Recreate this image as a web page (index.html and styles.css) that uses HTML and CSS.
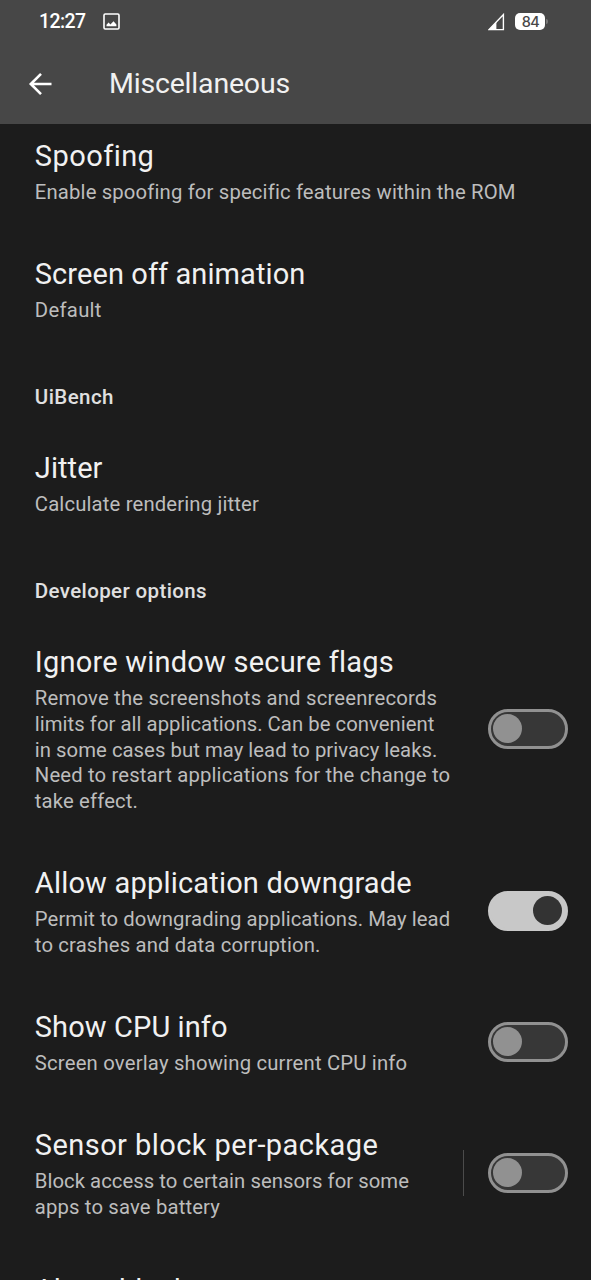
FILE: index.html
```html
<!DOCTYPE html>
<html lang="en">
<head>
<meta charset="utf-8">
<title>Miscellaneous</title>
<link rel="stylesheet" href="styles.css">
</head>
<body>
<div class="screen">
  <header class="header">
    <div class="status">
      <span class="clock">12:27</span>
      <svg class="picture" width="17" height="17" viewBox="0 0 17 17"><rect x="1" y="1" width="15" height="15" rx="1.2" fill="none" stroke="#fff" stroke-width="1.6"/><path d="M3.5 13.2V11.7L5.6 9.6L7.4 11.4L10.5 8.2L13.4 11.5V13.2Z" fill="#fff"/></svg>
      <svg class="signal" width="17" height="18" viewBox="0 0 17 18"><path d="M1.2 16.6L15.4 1.6V16.6Z" fill="none" stroke="#fff" stroke-width="1.4"/><path d="M.5 17L8.4 8.8V17Z" fill="#fff"/></svg>
      <span class="battery">84</span><span class="battery-tip"></span>
    </div>
    <div class="toolbar">
      <svg class="back" width="24" height="24" viewBox="0 0 24 24"><path d="M23.5 12H3M13 1.8L2.8 12L13 22.2" fill="none" stroke="#fff" stroke-width="2.6"/></svg>
      <h1 class="heading">Miscellaneous</h1>
    </div>
  </header>
  <main class="list">
    <section class="item"><div class="text">
      <h2 class="title t44">Spoofing</h2>
      <p class="summary"><span class="t15">Enable spoofing for specific features within the ROM</span></p>
    </div></section>
    <section class="item"><div class="text">
      <h2 class="title t08">Screen off animation</h2>
      <p class="summary"><span class="t30">Default</span></p>
    </div></section>
    <h3 class="category t44">UiBench</h3>
    <section class="item"><div class="text">
      <h2 class="title t08">Jitter</h2>
      <p class="summary"><span class="t15">Calculate rendering jitter</span></p>
    </div></section>
    <h3 class="category t38">Developer options</h3>
    <section class="item"><div class="text">
      <h2 class="title t22">Ignore window secure flags</h2>
      <p class="summary"><span class="t19">Remove the screenshots and screenrecords</span><br><span class="t04">limits for all applications. Can be convenient</span><br><span class="t04">in some cases but may lead to privacy leaks.</span><br><span class="t15">Need to restart applications for the change to</span><br><span class="t15">take effect.</span></p>
    </div><span class="switch"></span></section>
    <section class="item"><div class="text">
      <h2 class="title t19">Allow application downgrade</h2>
      <p class="summary"><span class="t08">Permit to downgrading applications. May lead</span><br><span class="t15">to crashes and data corruption.</span></p>
    </div><span class="switch on"></span></section>
    <section class="item"><div class="text">
      <h2 class="title t10">Show CPU info</h2>
      <p class="summary"><span class="t19">Screen overlay showing current CPU info</span></p>
    </div><span class="switch"></span></section>
    <section class="item"><div class="text">
      <h2 class="title t44">Sensor block per-package</h2>
      <p class="summary"><span class="t04">Block access to certain sensors for some</span><br><span class="t15">apps to save battery</span></p>
    </div><span class="divider"></span><span class="switch"></span></section>
    <section class="item last"><div class="text">
      <h2 class="title">Alarm blocker</h2>
    </div></section>
  </main>
</div>
</body>
</html>
```
FILE: styles.css
```css
* { box-sizing: border-box; }
body { margin: 0; background: #1c1c1c; font-family: Roboto, sans-serif; color: #f1f1f1; font-variant-ligatures: none; }
h1, h2, h3, p { margin: 0; font-weight: 400; }
.screen { width: 591px; height: 1280px; overflow: hidden; display: flex; flex-direction: column; }

.header { flex: none; height: 124px; background: #474747; }
.status { height: 44px; display: flex; align-items: center; padding: 0 43px 0 39px; }
.clock { width: 64px; font-size: 19.5px; font-weight: 500; letter-spacing: -.6px; color: #fff; line-height: 42px; padding-bottom: 1px; }
.picture { margin-bottom: 1px; }
.signal { margin-left: auto; margin-right: 10px; }
.battery { width: 30px; height: 17px; margin-bottom: 2px; border-radius: 5px; background: #fff; color: #474747; font-family: Inter, sans-serif; font-size: 14.5px; font-weight: 500; letter-spacing: -.6px; line-height: 17.5px; text-align: center; padding-left: 1px; }
.battery-tip { width: 2px; height: 5px; margin: 0 0 2px 1px; background: #777; border-radius: 0 2px 2px 0; }
.toolbar { height: 80px; display: flex; align-items: center; padding-left: 28px; }
.heading { margin-left: 57px; font-size: 28.5px; letter-spacing: -.19px; line-height: 38px; }

.list { flex: none; padding-top: 13px; margin-top: -24px; clip-path: inset(24px 0 0 0); }
.item { display: flex; align-items: center; padding: 24px 23px 25.3px 34.8px; }
.last { padding-top: 25px; }
.text { flex: 1; white-space: nowrap; }
.title { font-size: 29px; line-height: 38px; margin-bottom: 5px; }
.summary { font-size: 20.3px; line-height: 25.75px; color: #bdbdbd; }
.category { height: 76px; padding: 33px 0 0 34.8px; font-size: 20.5px; font-weight: 500; line-height: 30px; color: #e0e0e0; }

.switch { flex: none; width: 80px; height: 40px; padding: 2px; border: 3px solid #919191; border-radius: 20px; background: #373737; }
.switch::before { content: ""; display: block; width: 29px; height: 29px; border-radius: 50%; background: #919191; }
.switch.on { background: #c8c8c8; border-color: #c8c8c8; }
.switch.on::before { margin-left: 40px; background: #333; }
.divider { width: 1px; height: 46px; margin-right: 24px; background: #4b4b4b; }

/* Tracking steps, in hundredths of a pixel */
.t04 { letter-spacing: .04px; }
.t08 { letter-spacing: .08px; }
.t10 { letter-spacing: .1px; }
.t15 { letter-spacing: .15px; }
.t19 { letter-spacing: .19px; }
.t22 { letter-spacing: .22px; }
.t30 { letter-spacing: .3px; }
.t38 { letter-spacing: .38px; }
.t44 { letter-spacing: .44px; }
```
